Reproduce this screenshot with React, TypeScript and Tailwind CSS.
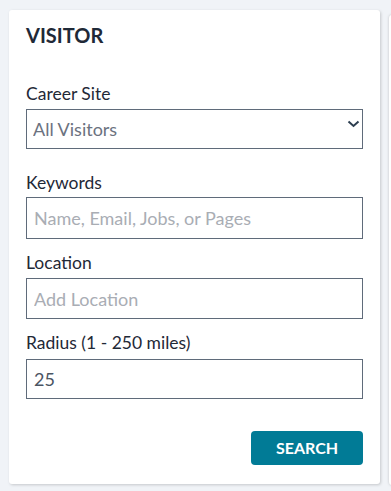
import React, { useState } from 'react'

const labelCls = 'block text-[17.5px] leading-[24px] text-[#1f2937]'
const inputCls =
  'block w-full border border-[#5f6b7a] bg-white px-[7px] text-[18px] text-[#4b5563] placeholder-[#a9adb4] outline-none'

const VisitorFilter = () => {
  const [site, setSite] = useState('all')
  const [keywords, setKeywords] = useState('')
  const [location, setLocation] = useState('')
  const [radius, setRadius] = useState('25')

  return (
    <div className="w-[371px] shrink-0 rounded-[3px] bg-white px-[17px] pt-[13px] pb-[19px] shadow-[1px_1px_3px_rgba(0,0,0,0.18)]">
      <h2 className="text-[20px] font-bold leading-[24px] text-[#1f2937]">VISITOR</h2>

      <div className="mt-[35px]">
        <label className={labelCls}>Career Site</label>
        <div className="relative mt-[3px]">
          <select
            value={site}
            onChange={(e) => setSite(e.target.value)}
            className="block h-[40px] w-full appearance-none border border-[#5f6b7a] bg-white px-[6px] text-[18px] text-[#6b7280] outline-none"
          >
            <option value="all">All Visitors</option>
            <option value="new">New Visitors</option>
          </select>
          <svg
            className="pointer-events-none absolute right-[3px] top-[11px]"
            width="13"
            height="8"
            viewBox="0 0 13 8"
            fill="none"
          >
            <path d="M1.5 1.5 L6.5 6 L11.5 1.5" stroke="#2d3e50" strokeWidth="2" />
          </svg>
        </div>
      </div>

      <div className="mt-[22px]">
        <label className={labelCls}>Keywords</label>
        <input
          type="text"
          value={keywords}
          onChange={(e) => setKeywords(e.target.value)}
          placeholder="Name, Email, Jobs, or Pages"
          className={inputCls + ' mt-[2px] h-[42px]'}
        />
      </div>

      <div className="mt-[12px]">
        <label className={labelCls}>Location</label>
        <input
          type="text"
          value={location}
          onChange={(e) => setLocation(e.target.value)}
          placeholder="Add Location"
          className={inputCls + ' mt-[3px] h-[41px]'}
        />
      </div>

      <div className="mt-[12px]">
        <label className={labelCls}>Radius (1 - 250 miles)</label>
        <input
          type="text"
          value={radius}
          onChange={(e) => setRadius(e.target.value)}
          className={inputCls + ' mt-[4px] h-[40px]'}
        />
      </div>

      <div className="mt-[32px] flex justify-end">
        <button
          type="button"
          className="h-[34px] w-[112px] rounded-[4px] bg-[#017b96] text-[16px] font-bold text-white"
        >
          SEARCH
        </button>
      </div>
    </div>
  )
}

export default function App() {
  return (
    <div
      className="flex h-screen w-screen items-start gap-[9px] overflow-hidden bg-[#f0f3f7] pl-[9px] pt-[10px]"
      style={{ fontFamily: 'Lato, "Open Sans", sans-serif' }}
    >
      <VisitorFilter />
      <div className="mt-[5px] h-[470px] w-[300px] shrink-0 rounded-[3px] bg-white shadow-[0_0_3px_rgba(0,0,0,0.2)]" />
    </div>
  )
}
